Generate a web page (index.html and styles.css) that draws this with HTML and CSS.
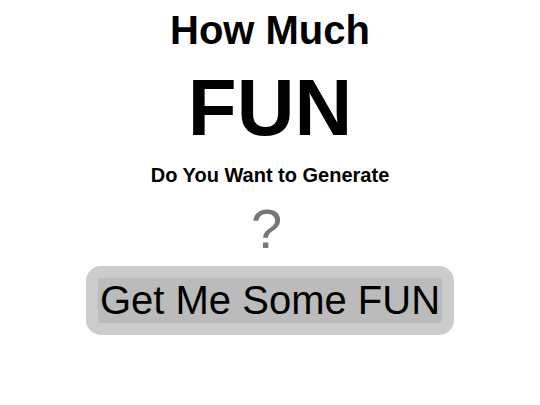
FILE: index.html
```html
<!DOCTYPE html>
<html lang="en">
  <head>
    <meta charset="utf-8" />
    <title>Fun Generator</title>
    <link rel="stylesheet" href="styles.css">
  </head>
  <body>
    <div class="intro">
      <h1 class="howMuch">How Much</h1>
      <div class="fun">FUN</div>
      <h3 class="question">Do You Want to Generate</h3>
      <div id="result" class="result">?</div>
      <button id="generate" class="generateBtn">Get Me Some FUN</button>
    </div>
  </body>
</html>
```

FILE: styles.css
```css
body {
  margin: 8px;
  background-color: white;
  color: black;
  font-family: "Liberation Sans", Arial, sans-serif;
}

.intro {
  display: flex;
  flex-direction: column;
  align-items: center;
}

.howMuch {
  margin: 0;
  font-size: 40px;
  font-weight: bold;
}

.fun {
  margin-top: 9px;
  font-size: 80px;
  font-weight: bold;
}

.question {
  margin: 10px 0 0;
  font-size: 20px;
  font-weight: bold;
}

.result {
  margin-top: 9px;
  padding-right: 7px;
  font-size: 56px;
  color: #777;
}

.generateBtn {
  margin-top: 5px;
  padding: 0 2px;
  font-family: "Liberation Sans", Arial, sans-serif;
  font-size: 40px;
  line-height: 45px;
  color: black;
  background-color: #bbb;
  border: 12px solid #ccc;
  border-radius: 15px;
  cursor: pointer;
}
```
